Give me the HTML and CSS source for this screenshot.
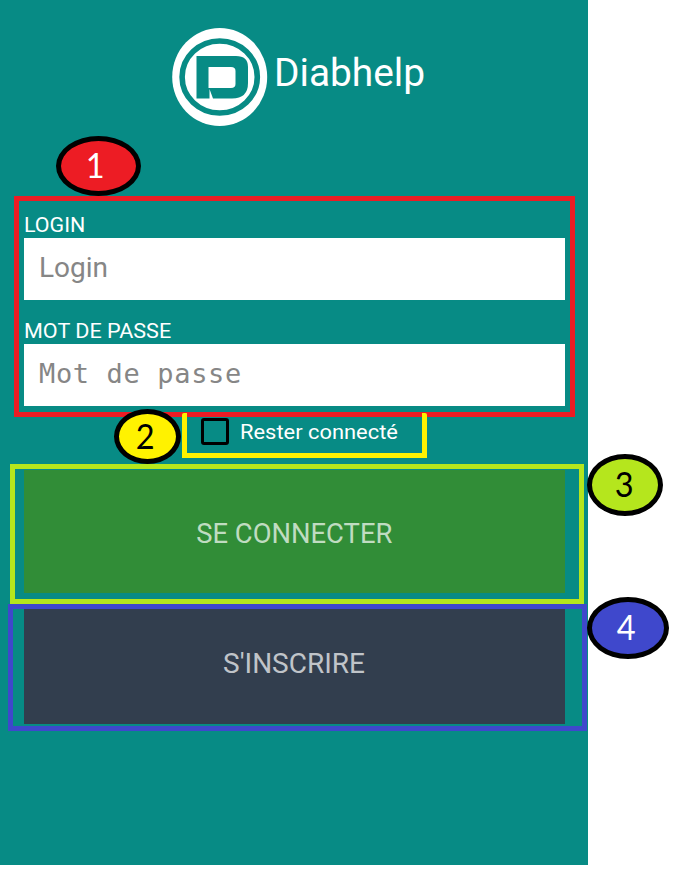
FILE: index.html
```html
<!DOCTYPE html>
<html lang="fr">
<head>
<meta charset="utf-8">
<title>Diabhelp</title>
<link rel="stylesheet" href="styles.css">
</head>
<body>
<main class="screen">
  <header class="brand">
    <svg class="logo" viewBox="172 28 96 98">
      <ellipse cx="219.7" cy="77" rx="47.5" ry="49" fill="#fff"/>
      <ellipse cx="219.7" cy="77" rx="37.6" ry="36" fill="none" stroke="#078b85" stroke-width="5.6"/>
      <path fill="#078b85" fill-rule="evenodd" d="M196.500 56H236Q248 56 248 67V83Q248 98.500 232 98.500H213L209.500 89V98.500H196.500ZM208.500 67V88H231Q235.500 88 235.500 84V71Q235.500 67 231 67Z"/>
    </svg>
    <h1 class="title"><span class="fit t-title">Diabhelp</span></h1>
  </header>
  <form class="form">
    <label class="label"><span class="fit t-login">LOGIN</span></label>
    <div class="input">Login</div>
    <label class="label second"><span class="fit t-pass">MOT DE PASSE</span></label>
    <div class="input mono">Mot de passe</div>
    <div class="remember"><span class="box"></span><span class="fit t-rem">Rester connecté</span></div>
    <div class="button connect"><span class="fit t-conn">SE CONNECTER</span></div>
    <div class="button register"><span class="fit">S'INSCRIRE</span></div>
  </form>
</main>
<div class="frame f1"></div>
<div class="frame f2"></div>
<div class="frame f3"></div>
<div class="frame f4"></div>
<div class="badge b1"><span class="digit">1</span></div>
<div class="badge b2"><span class="digit">2</span></div>
<div class="badge b3"><span class="digit">3</span></div>
<div class="badge b4"><span class="digit">4</span></div>
</body>
</html>
```
FILE: styles.css
```css
* { box-sizing: border-box; }
body { margin: 0; background: #fff; position: relative; width: 674px; height: 872px; overflow: hidden; font-family: Roboto, sans-serif; }
.screen { width: 588px; height: 865px; background: #078b85; color: #fff; padding: 28px 23.5px 0; }
.brand { display: flex; height: 98px; padding-left: 148.5px; }
.logo { width: 96px; height: 98px; flex: none; }
.title { margin: 0 0 0 5.5px; font-size: 39.5px; font-weight: 400; line-height: 90px; }
.fit { display: inline-block; transform-origin: left center; white-space: nowrap; }
.t-title { transform: scaleX(.983); }
.t-login { transform: scaleX(1.02); }
.t-pass { transform: scaleX(1.028); }
.t-rem { transform: scaleX(1.042); }
.t-conn { transform: scaleX(.978); }
.form { display: flex; flex-direction: column; padding-top: 86px; }
.label { height: 26.5px; font-size: 21px; line-height: 26px; }
.label.second { margin-top: 18px; }
.input { height: 61.5px; background: #fff; color: #868686; padding-left: 15.5px; font-size: 28px; line-height: 60px; }
.input:not(.mono) { margin-top: -.5px; }
.mono { font-family: "DejaVu Sans Mono", monospace; font-size: 27px; letter-spacing: .65px; white-space: pre; }
.remember { display: flex; align-items: center; height: 64px; padding: 0 0 12px 177.5px; font-size: 21px; }
.box { width: 28px; height: 27px; border: 3px solid #000; border-radius: 3px; margin-right: 10.5px; }
.button { display: flex; justify-content: center; font-size: 28px; }
.connect { height: 123.5px; background: #318d37; color: #c0dcc1; line-height: 127px; }
.register { height: 115px; margin-top: 15.5px; background: #323e4e; color: #c0c4c9; line-height: 110px; }
.button .fit { transform-origin: center; }
.frame { position: absolute; border: 5px solid; }
.f1 { left: 14px; top: 196px; width: 561px; height: 221px; border-color: #ed1c24; }
.f2 { left: 182px; top: 413px; width: 245px; height: 45px; border-color: #fff200; border-top: 0; border-radius: 2px 2px 0 0; }
.f3 { left: 10px; top: 464px; width: 574px; height: 140px; border-color: #b5e61d; }
.f4 { left: 8px; top: 604px; width: 579px; height: 127px; border-color: #3f48cc; }
.badge { position: absolute; display: flex; align-items: center; justify-content: center; border: 5px solid #000; border-radius: 50%; font-family: Lato, sans-serif; font-size: 35px; line-height: 1; padding-bottom: 3px; }
.digit { transform: scaleX(.93); }
.b1 { left: 56px; top: 136px; width: 85px; height: 60px; background: #ed1c24; color: #fff; padding-right: 7px; }
.b2 { left: 114px; top: 409px; width: 67px; height: 55px; background: #fff200; padding-right: 5px; }
.b3 { left: 587px; top: 454px; width: 76px; height: 62px; background: #b5e61d; padding-right: 2px; }
.b4 { left: 587px; top: 597px; width: 82px; height: 62px; background: #3f48cc; color: #fff; padding-right: 4px; }
```
